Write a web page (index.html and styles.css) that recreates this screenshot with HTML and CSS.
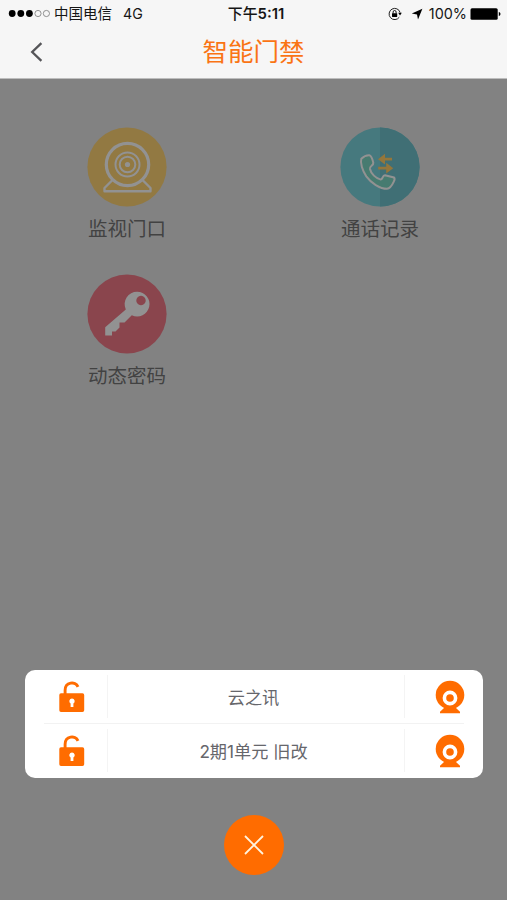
FILE: index.html
```html
<!DOCTYPE html>
<html lang="zh-CN">
<head>
<meta charset="utf-8">
<title>智能门禁</title>
<link rel="stylesheet" href="styles.css">
</head>
<body>
<header class="top">
  <div class="status">
    <div class="carrier">
      <svg class="signal" width="42" height="9" viewBox="0 0 42 9"><g fill="#000"><circle cx="4.2" cy="4.5" r="3.4"/><circle cx="12.8" cy="4.5" r="3.4"/><circle cx="21.4" cy="4.5" r="3.4"/></g><g fill="none" stroke="#777" stroke-width=".8"><circle cx="30" cy="4.5" r="3.1"/><circle cx="38.4" cy="4.5" r="3.1"/></g></svg>
      <span class="operator">中国电信</span><span class="network">4G</span>
    </div>
    <div class="time"><span>下午</span>5:11</div>
    <div class="indicators">
      <svg class="lock-rotation" width="14" height="14" viewBox="0 0 14 14"><path d="M11.3 10.2A5.6 5.6 0 1 1 12.1 5.5" fill="none" stroke="#222" stroke-width="1"/><path d="M10.2 5.8h3.6l-1.8 2.6z"/><rect x="4" y="6.2" width="5.2" height="3.8" rx=".4"/><path d="M5.1 6.5V5a1.5 1.5 0 0 1 3 0v1.5" fill="none" stroke="#000" stroke-width=".9"/></svg>
      <svg class="location" width="12" height="12" viewBox="0 0 12 12"><path d="M11.4.8 7 11.6 6 6.6.8 5.6z"/></svg>
      <span class="percent">100%</span>
      <svg class="battery" width="31" height="12" viewBox="0 0 31 12"><rect x=".5" y=".2" width="27.2" height="11.6" rx="1.5"/><path d="M28.8 4c2.2.6 2.2 3.4 0 4z"/></svg>
    </div>
  </div>
  <nav class="nav">
    <svg class="back" width="14" height="22" viewBox="0 0 14 22"><path d="M11.4 2.2 2.2 11l9.2 8.8" fill="none" stroke="#555558" stroke-width="2.3"/></svg>
    <h1>智能门禁</h1>
  </nav>
</header>
<main class="stage">
  <section class="tiles">
    <div class="tile">
      <svg width="80" height="80" viewBox="0 0 80 80"><circle class="yellow" cx="40" cy="40" r="39.6"/><g fill="none" class="pale-line"><circle cx="40.5" cy="37.5" r="21.2" stroke-width="3.2"/><circle cx="40.5" cy="37.5" r="12" stroke-width="2"/><circle cx="40.5" cy="37.5" r="7.8" stroke-width="2"/><path d="M25.5 53 17.5 61v3.3h46V61l-8-8" stroke-width="2.4" stroke-linejoin="round"/></g><circle class="pale-fill" cx="40.5" cy="37.5" r="2.6"/></svg>
      <span>监视门口</span>
    </div>
    <div class="tile">
      <svg width="80" height="80" viewBox="0 0 80 80"><circle class="teal" cx="40" cy="40" r="39.6"/><path class="teal-dark" d="M40 .4a39.6 39.6 0 0 1 0 79.2z"/><path class="phone" d="M21.3 31.8Q25 28 29.3 28.2C31.3 28.6 32.5 32 33.3 35.8 33.5 39.2 29.5 38.5 30 42 31 47 36 51.2 40.2 52.4 43.4 52.8 42 48 45 48.2L54 50.5Q55.3 52 53.8 54.6C52 58.5 50 61.5 47 61.8 40 61.8 31 56 26.3 49.4 22.5 43.8 20 36 21.3 31.8z" stroke-width="2" stroke-linejoin="round"/><g class="arrows"><path d="m38 32.2 7-5.4v4h7v2.8h-7v4zM53.2 41.2l-7-5.4v4h-8v2.8h8v4z"/></g></svg>
      <span>通话记录</span>
    </div>
    <div class="tile">
      <svg width="80" height="80" viewBox="0 0 80 80"><circle class="red" cx="40" cy="40" r="39.6"/><path class="pale-fill" fill-rule="evenodd" d="M50.2 17.7a12.4 12.4 0 1 1-5.4 23.6L37.5 48.6H32.5V53.4L28.5 57.6H25V61.6H18.2V53.2L38.8 35.4A12.4 12.4 0 0 1 50.2 17.7zM54 21.8a4.7 4.7 0 1 0 .01 0z"/></svg>
      <span>动态密码</span>
    </div>
  </section>
  <section class="sheet">
    <div class="row">
      <div class="unlock"><svg width="26" height="32" viewBox="0 0 26 32"><path d="M6.1 14V9.3C6.1 1 16.4-.2 19 5.8" fill="none" stroke="#ff6c00" stroke-width="2.9"/><path fill="#ff6c00" fill-rule="evenodd" d="M2 12.3h21.5q1.7 0 1.7 1.7v15.3q0 1.7-1.7 1.7H2Q.3 31 .3 29.3V14q0-1.7 1.7-1.7zM13 17.5a2.7 2.7 0 0 0-1.4 5v3.4h2.8v-3.4a2.7 2.7 0 0 0-1.4-5z"/></svg></div>
      <div class="name">云之讯</div>
      <div class="camera"><svg width="30" height="34" viewBox="0 0 30 34"><circle cx="15" cy="15" r="14.3" fill="#ff6c00"/><path fill="#ff6c00" d="M9 28h12l4 3.7v1.5H5v-1.5z"/><circle cx="15" cy="18" r="5.6" fill="#ff6c00" stroke="#fff" stroke-width="3.6"/></svg></div>
    </div>
    <div class="row">
      <div class="unlock"><svg width="26" height="32" viewBox="0 0 26 32"><path d="M6.1 14V9.3C6.1 1 16.4-.2 19 5.8" fill="none" stroke="#ff6c00" stroke-width="2.9"/><path fill="#ff6c00" fill-rule="evenodd" d="M2 12.3h21.5q1.7 0 1.7 1.7v15.3q0 1.7-1.7 1.7H2Q.3 31 .3 29.3V14q0-1.7 1.7-1.7zM13 17.5a2.7 2.7 0 0 0-1.4 5v3.4h2.8v-3.4a2.7 2.7 0 0 0-1.4-5z"/></svg></div>
      <div class="name">2期1单元 旧改</div>
      <div class="camera"><svg width="30" height="34" viewBox="0 0 30 34"><circle cx="15" cy="15" r="14.3" fill="#ff6c00"/><path fill="#ff6c00" d="M9 28h12l4 3.7v1.5H5v-1.5z"/><circle cx="15" cy="18" r="5.6" fill="#ff6c00" stroke="#fff" stroke-width="3.6"/></svg></div>
    </div>
  </section>
  <button class="close" aria-label="关闭"><svg width="20" height="20" viewBox="0 0 20 20"><path d="m1 1 18 18M19 1 1 19" stroke="#fff4df" stroke-width="1.8"/></svg></button>
</main>
</body>
</html>
```
FILE: styles.css
```css
* { box-sizing: border-box; }
body {
  margin: 0;
  width: 507px;
  height: 900px;
  overflow: hidden;
  display: flex;
  flex-direction: column;
  background: #828282;
  font-family: "Liberation Sans", "Noto Sans CJK SC", sans-serif;
}
svg { display: block; flex: none; }
.top {
  height: 79px;
  background: #f6f6f6;
  border-bottom: 1px solid #bdbdbd;
}
.status {
  display: grid;
  grid-template-columns: 1fr 70px 1fr;
  height: 27px;
  padding: 0 6px 0 8px;
  align-items: center;
  font-size: 14.5px;
  line-height: 27px;
  color: #151515;
  white-space: nowrap;
}
.carrier, .indicators { display: flex; align-items: center; }
.operator { margin-left: 4px; padding-top: 2px; line-height: 25px; }
.network { margin-left: 11px; font-family: Inter, sans-serif; font-size: 14.2px; }
.time {
  padding: 2px 0 0 3px;
  line-height: 25px;
  font-family: Inter, "Noto Sans CJK SC", sans-serif;
  font-size: 14.9px;
  font-weight: 600;
  text-align: center;
}
.time span { font-weight: 500; }
.indicators { justify-content: flex-end; }
.location { margin-left: 9px; }
.percent { margin-left: 6px; font-family: Inter, sans-serif; font-size: 14.4px; }
.battery { margin-left: 3px; }
.nav {
  display: grid;
  grid-template-columns: 30px 1fr 30px;
  height: 48px;
  align-items: center;
}
.back { margin: 0 0 0 30px; }
h1 {
  margin: 0;
  padding-top: 1px;
  text-align: center;
  font-size: 25.5px;
  line-height: 48px;
  font-weight: 400;
  color: #fa7414;
}
.stage {
  flex: 1;
  display: flex;
  flex-direction: column;
  align-items: center;
}
.tiles {
  width: 507px;
  height: 591px;
  padding-top: 48px;
  display: grid;
  grid-template-columns: 254px 252px;
  grid-auto-rows: 147px;
}
.tile { display: flex; flex-direction: column; align-items: center; }
.tile span {
  margin-top: 8px;
  font-size: 19.5px;
  line-height: 29px;
  color: #424242;
}
.yellow { fill: #927942; }
.teal { fill: #46797e; }
.teal-dark { fill: #406f75; }
.red { fill: #8a454d; }
.pale-line { stroke: #929292; }
.pale-fill { fill: #929292; }
.phone { fill: #477b70; stroke: #929292; }
.arrows { fill: #94763b; }
.sheet {
  width: 458px;
  height: 108px;
  padding: 0 19px;
  border-radius: 10px;
  background: #fff;
}
.row {
  display: grid;
  grid-template-columns: 63px 1fr 59px;
  height: 54px;
  align-items: center;
}
.row:first-child { border-bottom: 1px solid #f2f2f2; }
.row:last-child { padding-bottom: 1px; }
.unlock { padding-left: 15px; }
.name {
  height: 43px;
  padding-right: 4px;
  border: solid #f4f4f4;
  border-width: 0 1px;
  text-align: center;
  font-family: Inter, "Noto Sans CJK SC", sans-serif;
  font-size: 17.2px;
  line-height: 45px;
  color: #66666b;
}
.camera { padding-left: 30px; }
.close {
  display: flex;
  align-items: center;
  justify-content: center;
  width: 60px;
  height: 60px;
  margin-top: 37px;
  padding: 0;
  border: 0;
  border-radius: 50%;
  background: #ff6c00;
}
```
